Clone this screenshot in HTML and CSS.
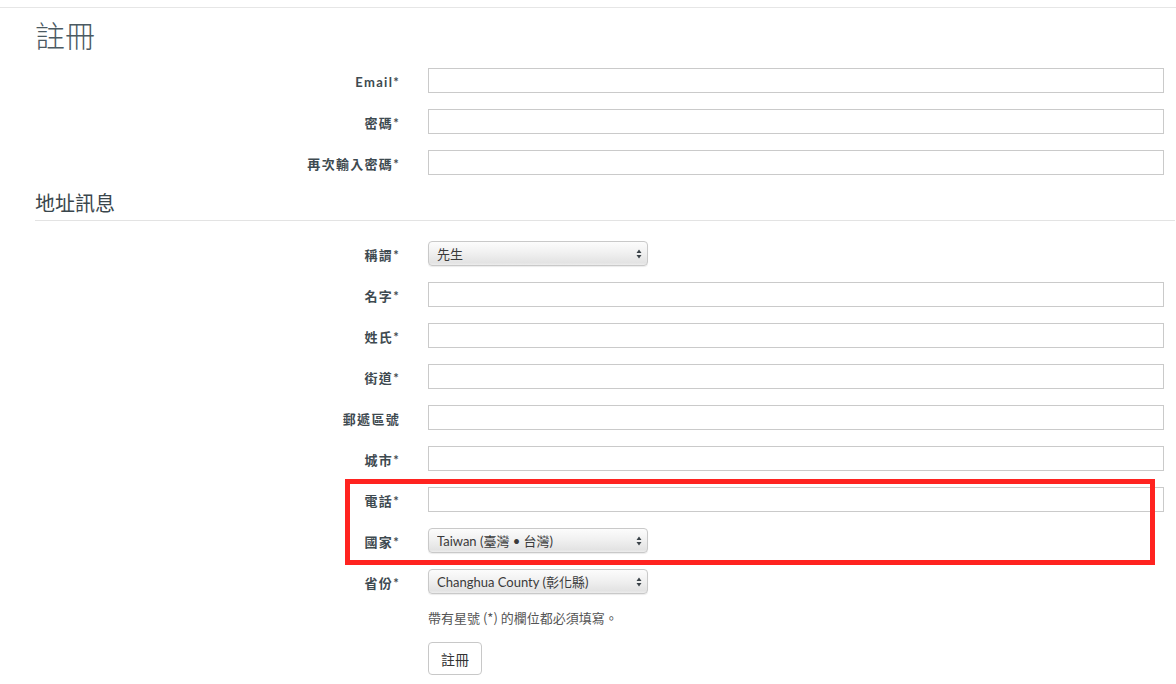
FILE: index.html
```html
<!DOCTYPE html>
<html lang="zh-Hant">
<head>
    <meta charset="UTF-8">
    <meta name="viewport" content="width=device-width, initial-scale=1.0">
    <title>註冊</title>
    <link rel="stylesheet" href="styles.css">
</head>
<body>
    <div class="topbar"></div>

    <div class="container">
        <h1>註冊</h1>

        <form class="form">
            <div class="fields">
                <div class="row">
                    <label>Email*</label>
                    <input type="text">
                </div>
                <div class="row">
                    <label>密碼*</label>
                    <input type="password">
                </div>
                <div class="row">
                    <label>再次輸入密碼*</label>
                    <input type="password">
                </div>
            </div>

            <h2>地址訊息</h2>

            <div class="fields">
                <div class="row">
                    <label>稱謂*</label>
                    <div class="select">
                        <select><option>先生</option><option>女士</option></select>
                        <svg class="arrows" viewBox="0 0 6 10"><path d="M3 0.5L5.5 4H0.5z M3 9.5L0.5 6H5.5z"/></svg>
                    </div>
                </div>
                <div class="row">
                    <label>名字*</label>
                    <input type="text">
                </div>
                <div class="row">
                    <label>姓氏*</label>
                    <input type="text">
                </div>
                <div class="row">
                    <label>街道*</label>
                    <input type="text">
                </div>
                <div class="row">
                    <label>郵遞區號</label>
                    <input type="text">
                </div>
                <div class="row">
                    <label>城市*</label>
                    <input type="text">
                </div>

                <div class="highlight">
                    <div class="row">
                        <label>電話*</label>
                        <input type="text">
                    </div>
                    <div class="row">
                        <label>國家*</label>
                        <div class="select">
                            <select><option>Taiwan (臺灣 • 台灣)</option></select>
                            <svg class="arrows" viewBox="0 0 6 10"><path d="M3 0.5L5.5 4H0.5z M3 9.5L0.5 6H5.5z"/></svg>
                        </div>
                    </div>
                </div>

                <div class="row">
                    <label>省份*</label>
                    <div class="select">
                        <select><option>Changhua County (彰化縣)</option></select>
                        <svg class="arrows" viewBox="0 0 6 10"><path d="M3 0.5L5.5 4H0.5z M3 9.5L0.5 6H5.5z"/></svg>
                    </div>
                </div>
            </div>

            <div class="actions">
                <p class="note">帶有星號 (*) 的欄位都必須填寫。</p>
                <button type="button" class="btn">註冊</button>
            </div>
        </form>
    </div>
</body>
</html>
```

FILE: styles.css
```css
* {
    margin: 0;
    padding: 0;
    box-sizing: border-box;
}

body {
    font-family: Lato, "Noto Sans CJK TC", sans-serif;
    background: #fff;
    color: #333;
}

.topbar {
    height: 8px;
    border-bottom: 1px solid #e6e6e6;
}

.container {
    padding: 0 1px 0 35px;
}

h1 {
    font-family: "Noto Sans CJK TC", sans-serif;
    font-size: 30px;
    font-weight: 300;
    line-height: 36px;
    color: #4b5a62;
    margin-top: 8px;
    margin-bottom: 16px;
}

h2 {
    font-family: "Noto Sans CJK TC", sans-serif;
    font-size: 20px;
    font-weight: 400;
    line-height: 28px;
    color: #3a464c;
    padding-top: 14px;
    padding-bottom: 3px;
    border-bottom: 1px solid #e3e3e3;
    margin-bottom: 20px;
}

.fields {
    display: flex;
    flex-direction: column;
    gap: 16px;
    padding-right: 11px;
}

.row {
    display: grid;
    grid-template-columns: 365px 1fr;
    column-gap: 28px;
    align-items: center;
    height: 25px;
}

.row label {
    text-align: right;
    font-size: 13px;
    font-weight: 700;
    letter-spacing: 1.3px;
    color: #3e4a50;
    padding-top: 2px;
}

.row input {
    height: 25px;
    border: 1px solid #cacaca;
    background: #fff;
    font-size: 13px;
    padding: 0 6px;
    outline: none;
}

/* select with a glossy gradient and small up/down arrows */
.select {
    position: relative;
    width: 220px;
    height: 25px;
}

.select select {
    appearance: none;
    -webkit-appearance: none;
    width: 100%;
    height: 100%;
    border: 1px solid #c9c9c9;
    border-radius: 4px;
    background: linear-gradient(#fcfcfc 0%, #f1f1f1 45%, #e3e3e3 90%, #ededed 100%);
    box-shadow: 0 1px 1px rgba(0, 0, 0, 0.08);
    font-family: Lato, "Noto Sans CJK TC", sans-serif;
    font-size: 13px;
    color: #3a3a3a;
    padding: 0 20px 0 8px;
    outline: none;
}

.select .arrows {
    position: absolute;
    right: 6px;
    top: 8px;
    width: 6px;
    height: 10px;
    fill: #3a4248;
    pointer-events: none;
}

.highlight {
    position: relative;
    display: flex;
    flex-direction: column;
    gap: 16px;
}

.highlight::after {
    content: "";
    position: absolute;
    top: -8px;
    bottom: -12px;
    left: 310px;
    right: 9px;
    border: 5px solid #ff2320;
    pointer-events: none;
}

.actions {
    padding-left: 393px;
    padding-top: 14px;
}

.note {
    font-family: "Noto Sans CJK TC", sans-serif;
    font-size: 13px;
    color: #555;
    line-height: 20px;
    margin-bottom: 14px;
}

.btn {
    width: 54px;
    height: 33px;
    border: 1px solid #c8c8c8;
    border-radius: 4px;
    background: #fff;
    font-family: "Noto Sans CJK TC", sans-serif;
    font-size: 14px;
    color: #333;
    cursor: pointer;
}
```
